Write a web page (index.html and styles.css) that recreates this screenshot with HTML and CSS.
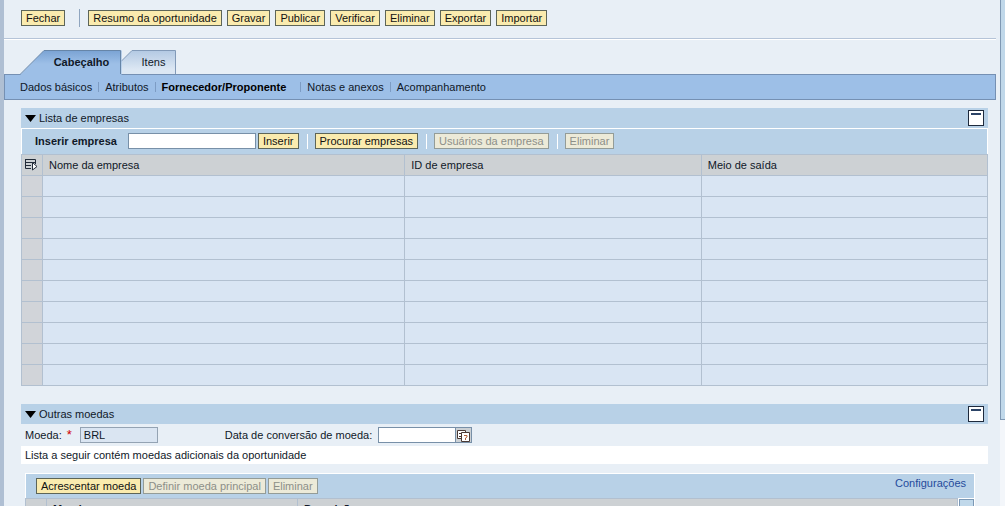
FILE: index.html
```html
<!DOCTYPE html>
<html lang="pt-BR">
<head>
<meta charset="utf-8">
<title>Oportunidade</title>
<link rel="stylesheet" href="styles.css">
</head>
<body>
<div class="page">
<main class="content">
  <div class="actions">
    <button class="btn" type="button">Fechar</button>
    <span class="actions-sep"></span>
    <button class="btn" type="button">Resumo da oportunidade</button>
    <button class="btn" type="button">Gravar</button>
    <button class="btn" type="button">Publicar</button>
    <button class="btn" type="button">Verificar</button>
    <button class="btn" type="button">Eliminar</button>
    <button class="btn" type="button">Exportar</button>
    <button class="btn" type="button">Importar</button>
  </div>

  <div class="tabs">
    <button class="tab tab-active" type="button">
      <svg class="tab-shape" width="102" height="25" viewBox="0 0 102 25" aria-hidden="true">
        <defs><linearGradient id="ga" x1="0" y1="0" x2="0" y2="1"><stop offset="0" stop-color="#7aa3d4"/><stop offset=".55" stop-color="#9dbfe7"/></linearGradient></defs>
        <path d="M0 25 24 .5H101.500V25Z" fill="url(#ga)"/>
        <path d="M0 24.500 24 .5H100.500V24" fill="none" stroke="#6685a8"/>
      </svg>
      <span class="tab-text">Cabeçalho</span>
    </button>
    <button class="tab tab-second" type="button">
      <svg class="tab-shape" width="55" height="25" viewBox="0 0 55 25" aria-hidden="true">
        <defs><linearGradient id="gb" x1="0" y1="0" x2="0" y2="1"><stop offset="0" stop-color="#b3c9e3"/><stop offset=".8" stop-color="#dce7f3"/></linearGradient></defs>
        <path d="M0 24V11.500L11 .5H54.500V24Z" fill="url(#gb)"/>
        <path d="M0 11.500 11 .5H54.500V24" fill="none" stroke="#829ab8"/>
      </svg>
      <span class="tab-text">Itens</span>
    </button>
  </div>
  <nav class="subnav">
    <a href="#dados">Dados básicos</a>
    <a href="#atributos">Atributos</a>
    <a class="current" href="#fornecedor">Fornecedor/Proponente</a>
    <a href="#notas">Notas e anexos</a>
    <a href="#acompanhamento">Acompanhamento</a>
  </nav>

  <section class="panel">
    <header class="panel-head">
      <svg width="11" height="7" viewBox="0 0 11 7" aria-hidden="true"><path d="M0 0H11L5.500 7Z"/></svg>
      <h2>Lista de empresas</h2>
      <button class="collapse" type="button" aria-label="Minimizar"></button>
    </header>
    <div class="toolbar">
      <label class="strong company-label" for="empresa">Inserir empresa</label>
      <input class="field company" id="empresa" type="text">
      <button class="btn" type="button">Inserir</button>
      <span class="tool-sep"></span>
      <button class="btn" type="button">Procurar empresas</button>
      <span class="tool-sep"></span>
      <button class="btn" type="button" disabled>Usuários da empresa</button>
      <span class="tool-sep"></span>
      <button class="btn" type="button" disabled>Eliminar</button>
    </div>
    <table class="grid">
      <colgroup><col class="col-select"><col class="col-name"><col class="col-id"><col></colgroup>
      <thead>
        <tr>
          <th class="pick">
            <svg width="13" height="12" viewBox="0 0 13 12" aria-hidden="true"><path d="M.5.500H10.500V5M.5 0V9.500H6M.5 3.500H10.500M.5 6.500H6" fill="none" stroke="#222b38"/><path d="M7.500 3.500V11L12 7.500Z" fill="#fff" stroke="#222b38"/></svg>
          </th>
          <th>Nome da empresa</th><th>ID de empresa</th><th>Meio de saída</th>
        </tr>
      </thead>
      <tbody>
        <tr><td></td><td></td><td></td><td></td></tr>
        <tr><td></td><td></td><td></td><td></td></tr>
        <tr><td></td><td></td><td></td><td></td></tr>
        <tr><td></td><td></td><td></td><td></td></tr>
        <tr><td></td><td></td><td></td><td></td></tr>
        <tr><td></td><td></td><td></td><td></td></tr>
        <tr><td></td><td></td><td></td><td></td></tr>
        <tr><td></td><td></td><td></td><td></td></tr>
        <tr><td></td><td></td><td></td><td></td></tr>
        <tr><td></td><td></td><td></td><td></td></tr>
      </tbody>
    </table>
  </section>

  <section class="panel currencies">
    <header class="panel-head">
      <svg width="11" height="7" viewBox="0 0 11 7" aria-hidden="true"><path d="M0 0H11L5.500 7Z"/></svg>
      <h2>Outras moedas</h2>
      <button class="collapse" type="button" aria-label="Minimizar"></button>
    </header>
    <div class="form-row">
      <label for="moeda">Moeda: <span class="required">*</span></label>
      <input class="field currency" id="moeda" type="text" value="BRL" readonly>
      <label for="data">Data de conversão de moeda:</label>
      <div class="date">
        <input class="field date-field" id="data" type="text">
        <button class="date-btn" type="button" aria-label="Calendário">
          <svg width="13" height="13" viewBox="0 0 13 13" aria-hidden="true"><g fill="#fff" stroke="#4a3a35"><path d="M.5 1.500H8.500V9.500H.5Z"/><path d="M2 4.500H5M2 7.500H5" fill="none"/><path d="M4.500 3.500H12.500V12.500H4.500Z"/></g><path d="M7 6.500H10V8L8.500 9V11" fill="none" stroke="#b0603a"/></svg>
        </button>
      </div>
    </div>
    <p class="note">Lista a seguir contém moedas adicionais da oportunidade</p>
    <div class="inner">
      <div class="toolbar inner-tools">
        <button class="btn" type="button">Acrescentar moeda</button>
        <button class="btn" type="button" disabled>Definir moeda principal</button>
        <button class="btn" type="button" disabled>Eliminar</button>
        <a class="settings" href="#config">Configurações</a>
      </div>
      <div class="inner-body">
        <table class="grid inner-grid">
          <colgroup><col class="col-select"><col class="col-currency"><col></colgroup>
          <thead><tr><th></th><th class="strong">Moeda</th><th class="strong">Descrição</th></tr></thead>
        </table>
        <button class="scroll-up" type="button" aria-label="Rolar para cima"></button>
      </div>
    </div>
  </section>
</main>
<div class="page-scroll"><div class="page-thumb"></div></div>
</div>
</body>
</html>
```
FILE: styles.css
```css
* { box-sizing: border-box; }
body, button, input, table {
  font: 11px/13px "Liberation Sans", Arial, sans-serif;
  color: #101828;
}
body { margin: 0; overflow: hidden; background: #e8eff6; }
button, input { margin: 0; border-radius: 0; }
a { color: inherit; text-decoration: none; }

.page { display: flex; height: 100vh; overflow: hidden; border-left: 4px solid #afbfd3; }
.content { flex: 1; min-width: 0; padding-right: 4px; }
.page-scroll { width: 5px; background: #f3f6fa; }
.page-thumb { height: 83%; background: #c0d8ea; border: solid #7f98b3; border-width: 0 0 1px 1px; }

.btn {
  height: 16px;
  padding: 0 4px;
  line-height: 14px;
  border: 1px solid #5d6558;
  background: #faebae;
  color: #111;
  white-space: nowrap;
}
.btn:disabled { background: #ecead8; border-color: #949c97; color: #8d8f88; }

.actions {
  display: flex;
  align-items: center;
  gap: 5px;
  height: 39px;
  padding: 0 17px 3px;
  border-bottom: 1px solid #b5c4d8;
  box-shadow: 0 1px #fff;
}
.actions-sep { width: 1px; height: 18px; margin: 0 3px 0 9px; background: #8fa5bf; }

.tabs { display: flex; height: 35px; padding: 11px 16px 0; }
.tab { position: relative; height: 25px; padding: 0; border: 0; background: none; }
.tab-active { width: 101px; z-index: 1; font-weight: bold; }
.tab-second { width: 55px; }
.tab-shape { position: absolute; left: 0; top: 0; }
.tab-text { position: relative; }
.tab-active .tab-text { padding-left: 22px; }
.tab-second .tab-text { padding-left: 10px; }

.subnav {
  display: flex;
  align-items: center;
  height: 26px;
  padding-left: 15px;
  border: 1px solid #7590b3;
  background: #9dbfe7;
}
.subnav a + a { margin-left: 6px; padding-left: 6px; border-left: 1px solid #7d9cc4; line-height: 10px; }
.subnav .current { margin-right: 8px; font-weight: bold; color: #000; }

.panel { margin: 8px 8px 0 17px; }
.panel-head { display: flex; align-items: center; gap: 3px; height: 20px; padding: 0 4px; background: #b8d1e7; }
.panel-head h2 { flex: 1; margin: 0; font-size: 11px; font-weight: normal; }
.collapse { width: 16px; height: 16px; padding: 2px; border: 1px solid #1e2a3d; background: #fff; }
.collapse::before { content: ""; display: block; height: 2px; margin-bottom: 8px; background: #2c4467; }

.toolbar {
  display: flex;
  align-items: center;
  gap: 2px;
  height: 26px;
  padding: 0 0 1px 13px;
  border: solid #fff;
  border-width: 1px 1px 0;
  background: #b8d1e7;
}
.strong { font-weight: bold; }
.company-label { margin-right: 9px; }
.tool-sep { width: 1px; height: 15px; margin: 0 5px 0 6px; background: #fff; }
.field { height: 16px; padding: 0 3px; border: 1px solid #7890a8; background: #fff; }
.company { width: 128px; }

.grid { width: 100%; table-layout: fixed; border-collapse: collapse; border: 1px solid #9aa9b8; background: #d9e5f3; }
.col-select { width: 21px; }
.col-name { width: 37.500%; }
.col-id { width: 30.700%; }
.grid th, .grid td { height: 21px; padding: 0 6px; border: 1px solid #b2c0d0; text-align: left; font-weight: normal; }
.grid th { background: #cdd1d4; }
.grid td:first-child { background: #d1d4d9; }
.grid .pick { padding: 0 3px; }
.grid .pick svg { display: block; }
.grid .strong { font-weight: bold; }

.currencies { margin-top: 18px; }
.form-row { display: flex; align-items: center; height: 22px; padding-left: 4px; }
.required { margin-left: 2px; color: #d00000; font-size: 13px; }
.currency { width: 78px; margin: 0 67px 0 8px; border-color: #94a3b3; background: #dae5f2; }
.date { display: flex; margin-left: 6px; }
.date-field { width: 78px; }
.date-btn { width: 16px; height: 16px; padding: 0 1px; border: 1px solid #7890a8; border-left: 0; background: #ccd1d5; }
.date-btn svg { display: block; }
.note { margin: 0; padding: 0 4px; background: #fff; line-height: 18px; }
.inner { margin: 9px 13px 0 4px; }
.inner-tools { height: 25px; padding: 0 8px 1px 10px; }
.settings { align-self: flex-start; margin: 3px 0 0 auto; color: #254b9c; }
.inner-body { display: flex; align-items: flex-start; background: #fff; }
.inner-grid { flex: 1; }
.col-currency { width: 251px; }
.scroll-up { width: 15px; height: 16px; margin: 1px; padding: 0; border: 1px solid #7b98b5; background: #c0d8ea; }
```
